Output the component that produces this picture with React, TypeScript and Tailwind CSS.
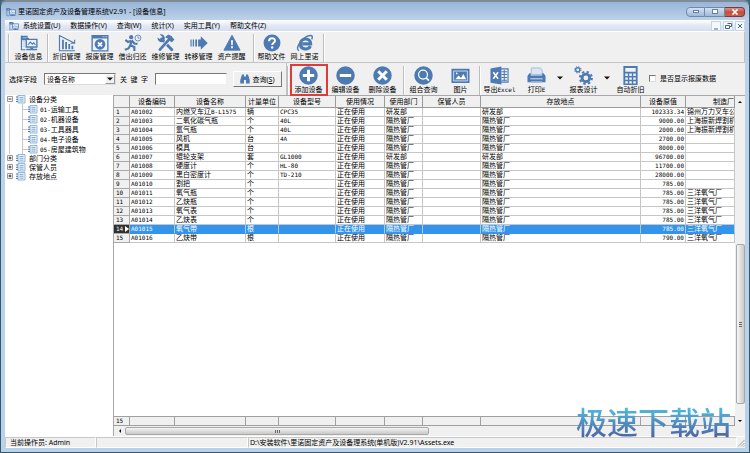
import React, { useState } from 'react';
import clsx from 'clsx';

type IconProps = { children: React.ReactNode; className?: string };

const Glyph: React.FC<IconProps> = ({ children, className = 'w-[19px] h-[19px]' }) => (
  <svg viewBox="0 0 20 20" className={clsx('shrink-0 text-[#4d7ab2]', className)} fill="currentColor" aria-hidden="true">
    {children}
  </svg>
);

const DeviceIcon = ({ className }: { className?: string }) => (
  <Glyph className={className}>
    <path d="M1 2h7.500v2.500H10V7H1z" />
    <path d="M1.600 2v15.500H6" fill="none" stroke="currentColor" strokeWidth="1.300" />
    <path d="M3 4.200h4.500M3 8.500h2.500M3 11h2.500M3 13.500h2.500" stroke="#a9c4e4" strokeWidth="1" />
    <path d="M6.200 5.200h13.300v10H6.200z" />
    <path d="M7.700 6.700h10.300v7H7.700z" fill="#eef2f8" />
    <path d="M8.800 12l2.700-3 2.200 2.300 1.500-1.500 2 2.200" fill="none" stroke="currentColor" strokeWidth="1.200" />
    <path d="M11.500 15h3v1.500h-3zM7 16.500h12V18H7z" />
  </Glyph>
);

const DepreciationIcon = () => (
  <Glyph>
    <path d="M1 1h1.300v17H19v1.300H1zM4.500 6.500h2v10.500h-2zM8 9h2v8H8zM11.500 11h2v6h-2zM15 13h2v4h-2z" />
    <path d="M2 2l16 8M18.500 6.500V10.300h-4.500" fill="none" stroke="currentColor" strokeWidth="1.200" />
  </Glyph>
);

const ScrapIcon = () => (
  <Glyph>
    <path d="M0.500 1h19v18.500h-19z" />
    <path d="M2 5h16v13H2z" fill="#eef2f8" />
    <path d="M13 3h1M15 3h1M17 3h1" stroke="#eef2f8" />
    <circle cx="10" cy="11.500" r="5.900" />
    <path d="M7.700 9.200l4.600 4.600M12.300 9.200l-4.600 4.600" stroke="#fff" strokeWidth="1.900" />
  </Glyph>
);

const BorrowIcon = () => (
  <Glyph>
    <circle cx="8" cy="3.500" r="2.300" />
    <path d="M8 7.500L4.500 9 1.500 6.500M8.500 7l3 3.500 3.500 .5M8.500 8L7 12.500l4.500 2V19M7 12.500L5 16l-4 1.500" fill="none" stroke="currentColor" strokeWidth="2.400" />
    <circle cx="15.500" cy="4.500" r="3.300" fill="none" stroke="currentColor" strokeWidth="0.900" />
    <path d="M15.500 2.500v2.200h1.800" fill="none" stroke="currentColor" strokeWidth="0.800" />
  </Glyph>
);

const RepairIcon = () => (
  <Glyph>
    <path d="M5 5.500l11.500 12" stroke="currentColor" strokeWidth="3.200" strokeLinecap="round" />
    <path d="M0.500 4L4.500 6.500 6 3 3 .5C7-.5 9.500 3 8.500 6L6 9C3 10 .5 7.500.5 4z" />
    <path d="M4 16.500L13.500 6" stroke="#efefef" strokeWidth="4.500" />
    <path d="M3.200 17.300L13.500 6" stroke="currentColor" strokeWidth="3" strokeLinecap="round" />
    <path d="M9 3.500l3.500-3 4 2 1 2 2 1.200-2.800 3.600-2.200-1.300-1.500-2.500z" />
  </Glyph>
);

const TransferIcon = () => (
  <Glyph>
    <path d="M0.500 6h1.300v8H.5zM3 6h1.500v8H3zM5.800 6h2v8h-2zM9 6h3V2.500l7.700 7.500-7.700 7.500V14H9z" />
  </Glyph>
);

const AlertIcon = () => (
  <Glyph>
    <path d="M10 1.300l9 16.700H1z" stroke="currentColor" strokeWidth="1" strokeLinejoin="round" />
    <path d="M8.900 7h2.200l-.4 5.500H9.300zM9 13.700h2v2H9z" fill="#fff" />
  </Glyph>
);

const HelpIcon = () => (
  <Glyph>
    <circle cx="10" cy="10" r="9.400" />
    <path d="M6.700 8c0-4.500 6.700-4.300 6.600-.5 0 2.200-3.100 2.300-3.100 4.800" fill="none" stroke="#fff" strokeWidth="2.200" />
    <circle cx="10.200" cy="15" r="1.300" fill="#fff" />
  </Glyph>
);

const BrowserIcon = () => (
  <Glyph>
    <path d="M16 13.500c-2.500 5-11 4-11-2.500C5 4 16.500 3.500 16.300 11H7" fill="none" stroke="currentColor" strokeWidth="3.500" />
    <path d="M3.500 18.500C-2 17 6 4.500 14 2c4-1.200 5 .5 3.500 4" fill="none" stroke="currentColor" strokeWidth="1.600" />
  </Glyph>
);

const AddIcon = () => (
  <Glyph>
    <circle cx="10" cy="10" r="9.700" />
    <path d="M10 4v12M4 10h12" stroke="#fff" strokeWidth="3.200" />
  </Glyph>
);

const EditIcon = () => (
  <Glyph>
    <circle cx="10" cy="10" r="9.700" />
    <path d="M4 10h12" stroke="#fff" strokeWidth="3.200" />
  </Glyph>
);

const DeleteIcon = () => (
  <Glyph>
    <circle cx="10" cy="10" r="9.700" />
    <path d="M5.500 5.500l9 9M14.500 5.500l-9 9" stroke="#fff" strokeWidth="3.200" />
  </Glyph>
);

const SearchIcon = () => (
  <Glyph>
    <circle cx="10" cy="10" r="9.700" />
    <circle cx="9.500" cy="9" r="4.700" fill="none" stroke="#fff" strokeWidth="1.300" />
    <path d="M12.700 12.500l3 3" stroke="#fff" strokeWidth="1.800" />
  </Glyph>
);

const PictureIcon = () => (
  <Glyph>
    <path d="M0.500 3h19v15H.5z" />
    <path d="M2.800 5.300h14.400V15.700H2.800z" fill="none" stroke="#dfe8f4" strokeWidth="0.900" />
    <path d="M4.500 14l3.500-4 2.500 2.500 2.500-4 3 5.500z" fill="#fff" />
    <circle cx="6" cy="7.800" r="0.900" fill="#fff" />
  </Glyph>
);

const ExcelIcon = () => (
  <Glyph>
    <path d="M11 3h8v14h-8z" fill="#eef2f8" stroke="currentColor" strokeWidth="1.200" />
    <path d="M12 6h6M12 9h6M12 12h6M12 15h6M15 4v12" stroke="currentColor" strokeWidth="1.100" />
    <path d="M0.500 2.500L12 .5v19L.5 17.500z" />
    <path d="M3.500 6.500l5 7M8.500 6.500l-5 7" stroke="#fff" strokeWidth="1.700" />
  </Glyph>
);

const PrintIcon = () => (
  <Glyph>
    <path d="M4.500 2h9.500l2 2.500V9h-11.500z" fill="#dbe5f2" stroke="#9db7d8" strokeWidth="0.900" />
    <path d="M2.500 7.500H4V10h12V7.500h1.500l2 3V17H.5v-6.500z" />
    <path d="M3.500 13.500h13" stroke="#dbe5f2" strokeWidth="1" />
    <path d="M4 16h12v2H4z" fill="#a9c0de" />
  </Glyph>
);

const GearsIcon = () => (
  <Glyph>
    <circle cx="12.500" cy="12.500" r="4" fill="none" stroke="currentColor" strokeWidth="3" />
    <circle cx="12.500" cy="12.500" r="6.300" fill="none" stroke="currentColor" strokeWidth="2.200" strokeDasharray="2.500 2.450" />
    <circle cx="4" cy="4" r="2.200" fill="none" stroke="currentColor" strokeWidth="1.500" />
    <circle cx="4" cy="4" r="3.400" fill="none" stroke="currentColor" strokeWidth="1" strokeDasharray="1.400 1.270" />
  </Glyph>
);

const CalculatorIcon = () => (
  <Glyph>
    <path d="M2.500 0h15v20h-15z" />
    <path d="M4.500 2h11v4h-11z" fill="#eef2f8" />
    <path
      d="M4.500 8h2.700v2.500H4.500zM8.700 8h2.700v2.500H8.700zM12.900 8h2.700v2.500h-2.700zM4.500 12h2.700v2.500H4.500zM8.700 12h2.700v2.500H8.700zM12.900 12h2.700v2.500h-2.700zM4.500 16h2.700v2.500H4.500zM8.700 16h2.700v2.500H8.700zM12.900 16h2.700v2.500h-2.700z"
      fill="#eef2f8"
    />
  </Glyph>
);

const BinocularsIcon = () => (
  <Glyph className="w-2.5 h-2.5">
    <path d="M4 1h4v4h4V1h4l3.500 11v7H12v-7H8v7H.5v-7z" />
  </Glyph>
);

const FolderIcon = () => (
  <svg viewBox="0 0 10 9" className="w-2.5 h-[9px] shrink-0" aria-hidden="true">
    <path d="M2 .5h7v7.500H2z" fill="#eaf2fa" stroke="#7fa6cf" strokeWidth="0.800" />
    <path d="M3.500 2.500h4M3.500 4.300h4M3.500 6.100h4" stroke="#6fa0d0" strokeWidth="0.800" />
    <path d="M0 2h2M0 4.300h2M0 6.500h2" stroke="#4d7ab2" strokeWidth="1" />
  </svg>
);

const Arrow = ({ d, className }: { d: string; className?: string }) => (
  <svg viewBox="0 0 6 6" className={clsx('w-1.5 h-1.5 shrink-0', className)} aria-hidden="true">
    <path d={d} fill="#111" />
  </svg>
);

// Chinese text keeps the base font, latin runs get the half-width mono face
const Mixed: React.FC<{ text: string }> = ({ text }) => (
  <>
    {text.split(/([\x21-\x7e]+)/).map((part, i) =>
      i % 2 ? (
        <span key={i} className="font-['DejaVu_Sans_Mono',monospace] text-[6px] leading-none">{part}</span>
      ) : (
        part
      )
    )}
  </>
);

const Separator = () => <div className="w-px self-stretch bg-[#bdbdbd] border-r border-white box-content" />;

interface ToolProps {
  icon: React.ReactNode;
  label: string;
  width?: string;
  marked?: boolean;
}

const Tool: React.FC<ToolProps> = ({ icon, label, width = 'w-[33px]', marked }) => (
  <button type="button" className={clsx('relative flex flex-col items-center shrink-0 whitespace-nowrap leading-[9px]', width)}>
    {icon}
    <span><Mixed text={label} /></span>
    {marked && <span className="absolute -top-0.5 left-0 w-[38px] h-8 border-2 border-[#dc3c3c]" />}
  </button>
);

const menus = ['系统设置(U)', '数据操作(V)', '查询(W)', '统计(X)', '实用工具(Y)', '帮助文件(Z)'];

const categories = ['01-运输工具', '02-机器设备', '03-工具器具', '04-电子设备', '05-房屋建筑物'];

const headers = ['', '设备编码', '设备名称', '计量单位', '设备型号', '使用情况', '使用部门', '保管人员', '存放地点', '设备原值', '制造厂'];

// code, name, unit, model, department, price, manufacturer
const rows = [
  ['A01002', '内燃叉车辽B-L1575', '辆', 'CPC35', '研发部', '102333.34', '锦州万力叉车公'],
  ['A01003', '二氧化碳气瓶', '个', '40L', '隔热管厂', '9000.00', '上海振新焊割机'],
  ['A01004', '氩气瓶', '个', '40L', '隔热管厂', '2000.00', '上海振新焊割机'],
  ['A01005', '风机', '台', '4A', '隔热管厂', '2700.00', ''],
  ['A01006', '模具', '台', '', '隔热管厂', '8000.00', ''],
  ['A01007', '辊轮支架', '套', 'GL1000', '研发部', '96700.00', ''],
  ['A01008', '硬度计', '个', 'HL-80', '隔热管厂', '11700.00', ''],
  ['A01009', '黑白密度计', '个', 'TD-210', '隔热管厂', '28000.00', ''],
  ['A01010', '割把', '个', '', '隔热管厂', '785.00', ''],
  ['A01011', '氧气瓶', '个', '', '隔热管厂', '785.00', '三洋氧气厂'],
  ['A01012', '乙炔瓶', '个', '', '隔热管厂', '785.00', '三洋氧气厂'],
  ['A01013', '氧气表', '个', '', '隔热管厂', '785.00', '三洋氧气厂'],
  ['A01014', '乙炔表', '个', '', '隔热管厂', '785.00', '三洋氧气厂'],
  ['A01015', '氧气带', '根', '', '隔热管厂', '785.00', '三洋氧气厂'],
  ['A01016', '乙炔带', '根', '', '隔热管厂', '790.00', '三洋氧气厂'],
];

const Columns = () => (
  <colgroup>
    <col className="w-4" />
    <col className="w-[45px]" />
    <col className="w-[71px]" />
    <col className="w-[33px]" />
    <col className="w-[57px]" />
    <col className="w-[49px]" />
    <col className="w-[38px]" />
    <col className="w-[58px]" />
    <col />
    <col className="w-[45px]" />
    <col className="w-[49px]" />
  </colgroup>
);

const TitleBar = () => (
  <header className="h-[17px] shrink-0 flex items-center justify-between pl-px">
    <div className="flex items-center gap-0.5">
      <DeviceIcon className="w-2.5 h-2.5" />
      <h1 className="leading-[10px]">里诺固定资产及设备管理系统V2.91 - [设备信息]</h1>
    </div>
    <div className="flex h-2.5 text-white">
      <button type="button" aria-label="最小化" className="w-[19px] border border-[#7089a8] rounded-l-sm bg-linear-to-b from-[#d3e1f2] to-[#9fb9d8] flex items-center justify-center">
        <span className="w-1.5 h-[3px] bg-white border border-[#66809f]" />
      </button>
      <button type="button" aria-label="最大化" className="w-5 border border-l-0 border-[#7089a8] bg-linear-to-b from-[#d3e1f2] to-[#9fb9d8] flex items-center justify-center">
        <span className="w-1.5 h-[5px] bg-white border border-[#66809f]" />
      </button>
      <button type="button" aria-label="关闭" className="w-5 border border-l-0 border-[#7c3a38] rounded-r-sm bg-linear-to-b from-[#dc9186] via-[#c74b3b] to-[#c9604d] flex items-center justify-center">
        <svg viewBox="0 0 8 6" className="w-2 h-1.5" aria-hidden="true">
          <path d="M1.500 .5l5 5M6.500 .5l-5 5" stroke="#fff" strokeWidth="1.700" />
        </svg>
      </button>
    </div>
  </header>
);

const MenuBar = () => (
  <nav className="h-[11px] shrink-0 flex items-center bg-linear-to-b from-white via-[#e3e9f4] to-[#d5deee] pl-1">
    <DeviceIcon className="w-2.5 h-2.5" />
    <div className="flex gap-2.5 pl-1 leading-[10px]">
      {menus.map((m) => (
        <button key={m} type="button">{m}</button>
      ))}
    </div>
    <div className="ml-auto flex gap-0.5">
      {['M2 7h4', 'M3.500 1.500h4v3h-2M1.500 3.500h4v3h-4z', 'M2 2l4 4M6 2l-4 4'].map((d, i) => (
        <button key={d} type="button" aria-label={['最小化子窗口', '还原子窗口', '关闭子窗口'][i]} className="w-2.5 h-2.5 bg-[#f4f8fc] border border-[#c5d5e8]">
          <svg viewBox="0 0 8 8" className="w-2 h-2" fill="none" stroke="#4d6480" aria-hidden="true"><path d={d} /></svg>
        </button>
      ))}
    </div>
  </nav>
);

const MainToolbar = () => (
  <div className="h-8 shrink-0 flex items-start bg-[#f0f0f0] border-y border-t-white border-b-[#c4c4c4] border-r border-r-[#c4c4c4] pl-[3px] pt-0.5 [&_svg]:size-[18px]">
    <Separator />
    <Tool icon={<DeviceIcon className="w-[18px] h-[18px]" />} label="设备信息" width="w-[37px]" />
    <Separator />
    <div className="flex px-px">
      <Tool icon={<DepreciationIcon />} label="折旧管理" />
      <Tool icon={<ScrapIcon />} label="报废管理" />
      <Tool icon={<BorrowIcon />} label="借出归还" />
      <Tool icon={<RepairIcon />} label="维修管理" />
      <Tool icon={<TransferIcon />} label="转移管理" />
      <Tool icon={<AlertIcon />} label="资产提醒" />
    </div>
    <div className="w-1" />
    <Separator />
    <div className="flex pr-0.5">
      <Tool icon={<HelpIcon />} label="帮助文件" />
      <Tool icon={<BrowserIcon />} label="网上里诺" />
    </div>
    <Separator />
  </div>
);

const SearchPanel = () => {
  const [keyword, setKeyword] = useState('');

  return (
    <form className="flex items-center shrink-0 px-1 border-r border-[#c4c4c4]" onSubmit={(e) => e.preventDefault()}>
      <label htmlFor="field" className="w-[35px]">选择字段</label>
      <div className="relative w-[72px] h-3">
        <select id="field" className="appearance-none block w-full h-full pl-0.5 bg-white border border-t-[#777] border-l-[#777] border-r-[#ddd] border-b-[#ddd] leading-[9px]">
          <option>设备名称</option>
        </select>
        <span className="absolute right-px top-px w-2.5 h-2.5 bg-[#f0f0f0] border border-r-[#999] border-b-[#999] border-t-white border-l-white flex items-center justify-center pointer-events-none">
          <Arrow d="M0 1.500h6L3 4.500z" />
        </span>
      </div>
      <label htmlFor="keyword" className="w-[39px] pl-1 whitespace-nowrap">关&ensp;键&ensp;字</label>
      <input
        id="keyword"
        value={keyword}
        onChange={(e) => setKeyword(e.target.value)}
        className="w-[72px] h-3 bg-white border border-t-[#777] border-l-[#777] border-r-[#eee] border-b-[#eee] px-0.5"
      />
      <button type="submit" className="ml-1.5 w-[49px] h-4 flex items-center justify-center gap-0.5 bg-[#f0f0f0] border border-t-white border-l-white border-r-[#777] border-b-[#777]">
        <BinocularsIcon />
        <span>查询(<u>S</u>)</span>
      </button>
    </form>
  );
};

const ActionToolbar = () => {
  const [showScrapped, setShowScrapped] = useState(false);

  return (
    <div className="h-8 shrink-0 flex bg-[#f0f0f0]">
      <SearchPanel />
      <div className="flex-1 min-w-0 flex items-start pt-[3px]">
        <Separator />
        <div className="flex pl-px pr-0.5">
          <Tool icon={<AddIcon />} label="添加设备" width="w-[37px]" marked />
          <Tool icon={<EditIcon />} label="编辑设备" width="w-[37px]" />
          <Tool icon={<DeleteIcon />} label="删除设备" width="w-[37px]" />
        </div>
        <Separator />
        <Tool icon={<SearchIcon />} label="组合查询" width="w-[37px]" />
        <Tool icon={<PictureIcon />} label="图片" width="w-[37px]" />
        <Separator />
        <Tool icon={<ExcelIcon />} label="导出Excel" width="w-[37px]" />
        <Tool icon={<PrintIcon />} label="打印E" width="w-[37px]" />
        <button type="button" aria-label="打印选项" className="w-2.5 h-6 flex items-center justify-center">
          <Arrow d="M0 1.500h6L3 4.500z" />
        </button>
        <Tool icon={<GearsIcon />} label="报表设计" width="w-[37px]" />
        <button type="button" aria-label="报表选项" className="w-2.5 h-6 flex items-center justify-center">
          <Arrow d="M0 1.500h6L3 4.500z" />
        </button>
        <Tool icon={<CalculatorIcon />} label="自动折旧" width="w-[37px]" />
        <label className="flex items-center gap-1 h-6 whitespace-nowrap">
          <input
            type="checkbox"
            checked={showScrapped}
            onChange={(e) => setShowScrapped(e.target.checked)}
            className="appearance-none w-[7px] h-[7px] bg-white border border-t-[#777] border-l-[#777] border-r-[#ddd] border-b-[#ddd] checked:bg-[#4d7ab2]"
          />
          是否显示报废数据
        </label>
      </div>
    </div>
  );
};

const Toggle = ({ open }: { open?: boolean }) => (
  <svg viewBox="0 0 7 7" className="w-[7px] h-[7px] shrink-0" fill="none" aria-hidden="true">
    <path d="M.5 .5h5v5h-5z" stroke="#9a9a9a" fill="#fff" />
    <path d={open ? 'M1.500 3h3' : 'M1.500 3h3M3 1.500v3'} stroke="#333" />
  </svg>
);

const Tree = () => (
  <aside className="w-[109px] shrink-0 bg-white pl-0.5 border-r border-[#a8a8a8]">
    <ul>
      <li>
        <div className="h-[9px] flex items-center"><Toggle open /><span className="w-0.5" /><FolderIcon /><span className="pl-[3px]">设备分类</span></div>
        <ul className="ml-0.5 border-l border-[#c8c8c8] pl-3">
          {categories.map((c) => (
            <li key={c} className="h-2.5 flex items-center">
              <span className="self-stretch border-l border-[#c8c8c8]" />
              <span className="w-[5px] h-px bg-[#c8c8c8]" />
              <FolderIcon />
              <span className="pl-0.5 whitespace-nowrap"><Mixed text={c} /></span>
            </li>
          ))}
        </ul>
      </li>
      {['部门分类', '保管人员', '存放地点'].map((name) => (
        <li key={name} className="h-[9px] flex items-center"><Toggle /><span className="w-0.5" /><FolderIcon /><span className="pl-[3px]">{name}</span></li>
      ))}
    </ul>
  </aside>
);

const Grid = () => {
  const [selected, setSelected] = useState(13);

  return (
    <div className="flex-1 min-w-0 min-h-0 flex flex-col overflow-hidden bg-white border-t border-[#a8a8a8]">
      <table className="w-full table-fixed border-separate border-spacing-0 whitespace-nowrap leading-[8px]">
        <Columns />
        <thead>
          <tr>
            {headers.map((h, i) => (
              <th key={i} className={clsx('h-3 p-0 font-normal bg-[#f0f0f0] border-r border-b border-[#9a9a9a]', i === 10 ? 'text-right' : 'text-center')}>{h}</th>
            ))}
          </tr>
        </thead>
        <tbody>
          {rows.map(([code, name, unit, model, dept, price, maker], i) => {
            const active = i === selected;
            const cells = [code, name, unit, model, '正在使用', dept, '', dept, price, maker];
            return (
              <tr key={code} onClick={() => setSelected(i)} className={active ? 'bg-[#3394ee] text-white' : ''}>
                <th scope="row" className={clsx('h-[9px] p-0 font-normal border-r border-b border-[#a8a8a8]', active ? 'bg-[#303030] text-white' : 'bg-[#f0f0f0]')}>
                  <span className="flex items-center justify-between pl-0.5">
                    <Mixed text={String(i + 1)} />
                    {active && <svg viewBox="0 0 4 6" className="w-1 h-1.5" aria-hidden="true"><path d="M0 0l4 3-4 3z" fill="#fff" /></svg>}
                  </span>
                </th>
                {cells.map((cell, n) => (
                  <td
                    key={n}
                    className={clsx(
                      'h-[9px] py-0 border-r border-b overflow-hidden',
                      active ? 'border-r-[#b4c8dc] border-b-[#3394ee]' : 'border-[#c6c6c6]',
                      n === 8 ? 'text-right px-px' : 'pl-px pr-0'
                    )}
                  >
                    <Mixed text={cell} />
                  </td>
                ))}
              </tr>
            );
          })}
        </tbody>
      </table>
      <div className="flex-1" />
      <table className="w-full table-fixed border-separate border-spacing-0 leading-[8px]">
        <Columns />
        <tbody>
          <tr>
            {headers.map((h, i) => (
              <td key={i} className="h-2.5 py-0 pl-0.5 pr-0 bg-[#f0f0f0] border-r border-y border-[#a0a0a0]">
                {i === 0 && <Mixed text="15" />}
              </td>
            ))}
          </tr>
        </tbody>
      </table>
      <div className="h-2.5 shrink-0 flex items-center bg-[#f0f0f0]">
        <span className="w-[11px] flex justify-center"><Arrow d="M4 1v4L2 3z" /></span>
        <div className="w-[49%] h-2 flex items-center justify-center gap-px border border-[#a8a8a8] rounded-xs bg-linear-to-b from-[#f4f4f4] to-[#c8c8c8]">
          <span className="w-px h-[3px] bg-[#666]" />
          <span className="w-px h-[3px] bg-[#666]" />
          <span className="w-px h-[3px] bg-[#666]" />
        </div>
      </div>
    </div>
  );
};

const VerticalScroll = () => (
  <div className="w-2.5 shrink-0 flex flex-col items-center bg-[#f0f0f0] border-t border-[#a8a8a8] pt-[3px] pb-3">
    <Arrow d="M1 4h4L3 2z" />
    <div className="flex-[139]" />
    <div className="flex-[158] w-[9px] flex flex-col items-center justify-center gap-px border border-[#a8a8a8] rounded-xs bg-linear-to-r from-[#f6f6f6] to-[#cacaca]">
      <span className="w-[3px] h-px bg-[#666]" />
      <span className="w-[3px] h-px bg-[#666]" />
      <span className="w-[3px] h-px bg-[#666]" />
    </div>
    <div className="h-3.5" />
    <Arrow d="M1 2h4L3 4z" />
  </div>
);

const StatusBar = () => (
  <footer className="h-3 shrink-0 flex bg-[#f0f0f0] border-t border-white leading-[10px] whitespace-nowrap">
    <span className="w-[91px] pl-1 border border-t-[#c8c8c8] border-l-[#c8c8c8] border-r-white border-b-white">当前操作员: Admin</span>
    <span className="w-[152px] border border-t-[#c8c8c8] border-l-[#c8c8c8] border-r-white border-b-white" />
    <span className="flex-1 pl-px border border-t-[#c8c8c8] border-l-[#c8c8c8] border-r-white border-b-white">D:\安装软件\里诺固定资产及设备理系统(单机版)V2.91\Assets.exe</span>
    <svg viewBox="0 0 8 10" className="w-2 h-2.5 shrink-0" stroke="#a0a0a0" fill="none" aria-hidden="true">
      <path d="M1 9.500l6.500-6.500M4 9.500L7.500 6M6.500 9.500l1-1" />
    </svg>
  </footer>
);

const App: React.FC = () => (
  <div className="h-screen bg-[#3f6679]">
    <div className="relative h-full flex flex-col px-1 pb-1 pt-px overflow-hidden rounded-t-md border border-t-2 border-[#35596c] border-t-[#7f8b96] bg-[#b9d1ea] bg-linear-to-b from-[#98b4d6] via-[#bdd2ea] via-[18px] to-[#b9d1ea] text-[7px] leading-[9px] text-black font-['Noto_Sans','Noto_Sans_CJK_SC',sans-serif]">
      <TitleBar />
      <MenuBar />
      <MainToolbar />
      <ActionToolbar />
      <main className="flex-1 min-h-0 flex bg-[#f0f0f0]">
        <Tree />
        <Grid />
        <VerticalScroll />
      </main>
      <StatusBar />
      <div className="absolute right-[18px] bottom-3.5 text-[31px] leading-8 font-medium text-transparent bg-clip-text bg-linear-to-b from-[#4cc0e2] to-[#4a62a4] pointer-events-none">
        极速下载站
      </div>
    </div>
  </div>
);

export default App;
